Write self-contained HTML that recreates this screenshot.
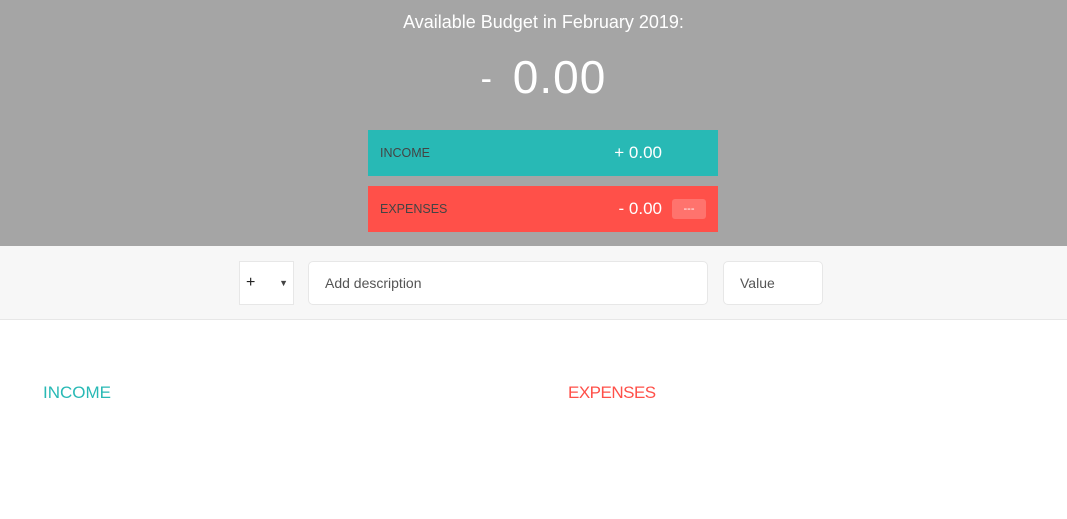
<!DOCTYPE html>
<html><head><meta charset="utf-8"><style>
*{margin:0;padding:0;box-sizing:border-box}
body{width:1067px;height:519px;background:#fff;font-family:"Liberation Sans",sans-serif;position:relative;overflow:hidden}
.top{position:absolute;left:0;top:0;width:1067px;height:246px;background:#a5a5a5;color:#fff;text-align:center}
.title{position:absolute;top:12px;left:10px;width:100%;font-size:18px;font-weight:300}
.big{position:absolute;top:50px;left:10px;width:100%;font-size:46px;font-weight:300;letter-spacing:1px}
.bar{position:absolute;left:368px;width:350px;height:46px}
.lbl{position:absolute;left:12px;top:16px;font-size:12.5px;color:#444}
.val{position:absolute;right:56px;top:13px;font-size:17px;color:#fff}
.pct{position:absolute;left:304px;top:13px;width:34px;height:20px;background:rgba(255,255,255,.2);border-radius:3px;font-size:11px;color:#fff;text-align:center;line-height:20px}
.form{position:absolute;top:246px;left:0;width:1067px;height:74px;background:#f7f7f7;border-bottom:1px solid #e7e7e7}
.box{position:absolute;top:15px;height:44px;background:#fff;border:1px solid #e7e7e7;border-radius:5px;font-size:14px;color:#555;line-height:42px;padding-left:16px}
.h{position:absolute;top:383px;font-size:17px;font-weight:300}
</style></head><body>
<div class="top">
<div class="title">Available Budget in February 2019:</div>
<div class="big"><span style="font-size:34px;vertical-align:3px;margin-right:6px">-</span> 0.00</div>
<div class="bar" style="top:130px;background:#28b9b5"><span class="lbl">INCOME</span><span class="val">+ 0.00</span></div>
<div class="bar" style="top:186px;background:#ff5049"><span class="lbl">EXPENSES</span><span class="val">- 0.00</span><span class="pct">---</span></div>
</div>
<div class="form">
<div class="box" style="left:239px;width:55px;border-radius:0;padding-left:6px;color:#222;font-size:16px">+<span style="position:absolute;right:5px;font-size:9px;color:#444">▼</span></div>
<div class="box" style="left:308px;width:400px">Add description</div>
<div class="box" style="left:723px;width:100px">Value</div>
</div>
<div class="h" style="left:43px;color:#28b9b5">INCOME</div>
<div class="h" style="left:568px;color:#ff5049;letter-spacing:-0.5px">EXPENSES</div>
</body></html>
